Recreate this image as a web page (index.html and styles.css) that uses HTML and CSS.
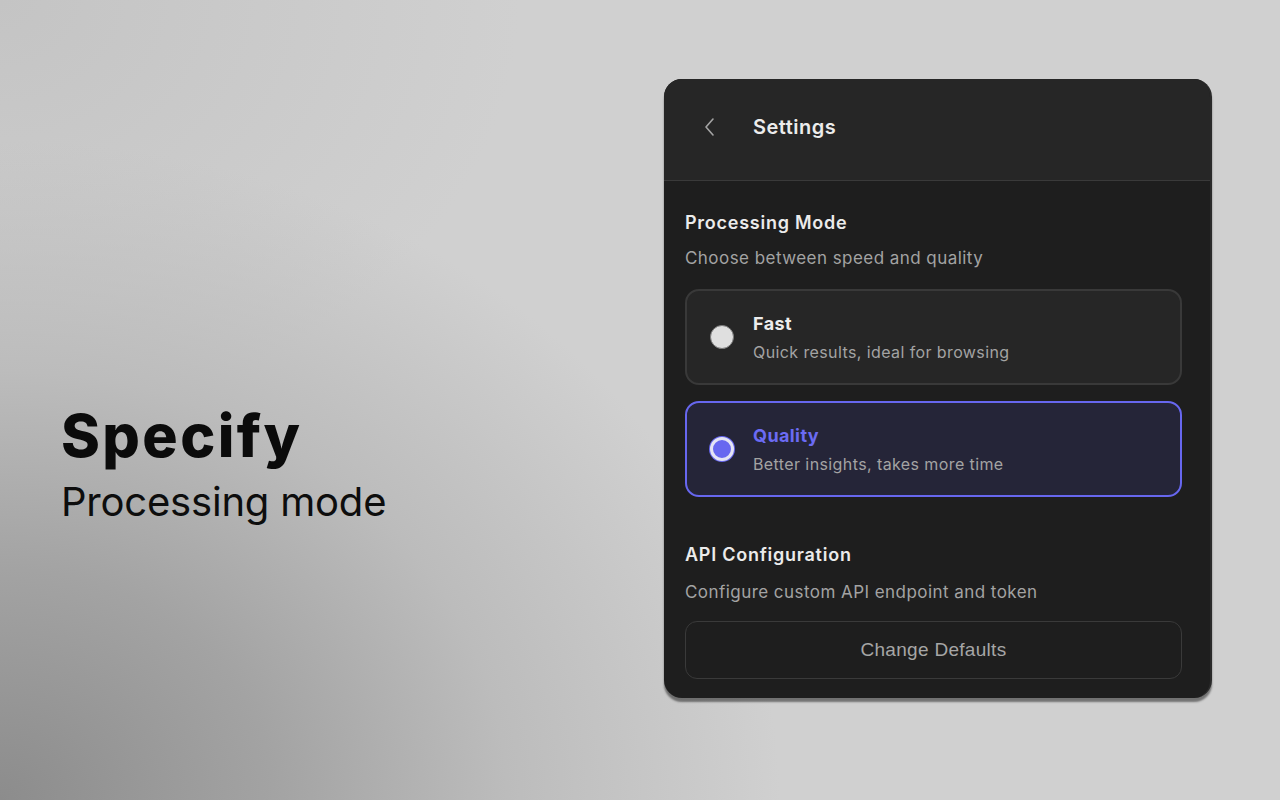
FILE: index.html
```html
<!DOCTYPE html>
<html lang="en">
<head>
<meta charset="utf-8">
<title>Specify – Processing mode</title>
<link rel="stylesheet" href="styles.css">
</head>
<body>
<main class="stage">
  <section class="intro">
    <h1 class="intro-title">Specify</h1>
    <p class="intro-sub">Processing mode</p>
  </section>

  <section class="panel">
    <header class="panel-header">
      <button class="back" aria-label="Back">
        <svg width="14" height="20" viewBox="0 0 14 20" fill="none" stroke="#a3a3a3" stroke-width="1.6" stroke-linecap="round" stroke-linejoin="round"><path d="M10 2 L3 10 L10 18"/></svg>
      </button>
      <h2 class="panel-title">Settings</h2>
    </header>

    <div class="panel-body">
      <h3 class="section-title">Processing Mode</h3>
      <p class="section-sub">Choose between speed and quality</p>

      <div class="options">
        <div class="option">
          <span class="radio"></span>
          <div class="option-text">
            <div class="option-title">Fast</div>
            <div class="option-sub">Quick results, ideal for browsing</div>
          </div>
        </div>
        <div class="option selected">
          <span class="radio checked"></span>
          <div class="option-text">
            <div class="option-title">Quality</div>
            <div class="option-sub">Better insights, takes more time</div>
          </div>
        </div>
      </div>

      <h3 class="section-title api">API Configuration</h3>
      <p class="section-sub api-sub">Configure custom API endpoint and token</p>
      <button class="defaults">Change Defaults</button>
    </div>
  </section>
</main>
</body>
</html>
```

FILE: styles.css
```css
* { box-sizing: border-box; }

html, body {
  margin: 0;
  padding: 0;
  width: 1280px;
  height: 800px;
  overflow: hidden;
}

body {
  font-family: Inter, "Noto Sans", "Liberation Sans", sans-serif;
  background:
    radial-gradient(ellipse 780px 660px at 0% 100%, #8c8c8c 0%, #a3a3a3 35%, #bcbcbc 65%, rgba(208,208,208,0) 100%),
    radial-gradient(ellipse 520px 420px at 0% 0%, #c4c4c4 0%, rgba(208,208,208,0) 100%),
    #d0d0d0;
}

.stage {
  display: flex;
  align-items: flex-start;
  height: 800px;
}

.intro {
  width: 664px;
  padding-left: 61px;
  margin-top: 401px;
}

.intro-title {
  margin: 0;
  font-size: 59px;
  line-height: 70px;
  font-weight: 800;
  color: #0b0b0b;
  letter-spacing: 2.4px;
}

.intro-sub {
  margin: 7px 0 0;
  font-size: 40px;
  line-height: 48px;
  font-weight: 400;
  color: #0d0d0d;
  letter-spacing: -0.2px;
}

.panel {
  margin-top: 79px;
  width: 548px;
  height: 619px;
  border-radius: 18px;
  background: #1e1e1e;
  overflow: hidden;
  box-shadow: 0 4px 2px rgba(0, 0, 0, 0.45);
  border-right: 2px solid #2b2b2b;
}

.panel-header {
  height: 102px;
  background: #262626;
  border-bottom: 1px solid #3a3a3a;
  display: flex;
  align-items: center;
  padding-left: 39px;
  padding-bottom: 5px;
}

.back {
  border: 0;
  background: none;
  padding: 0;
  width: 14px;
  height: 20px;
  display: flex;
  margin-right: 36px;
}

.panel-title {
  margin: 0;
  font-size: 20px;
  font-weight: 600;
  color: #ececec;
  letter-spacing: 0.5px;
}

.panel-body {
  padding: 29px 28px 0 21px;
}

.section-title {
  margin: 0;
  font-size: 18px;
  line-height: 26px;
  font-weight: 600;
  color: #ebebeb;
  letter-spacing: 0.75px;
}

.section-sub {
  margin: 10px 0 0;
  font-size: 17px;
  line-height: 24px;
  color: #a3a3a3;
  letter-spacing: 0.45px;
}

.options {
  margin-top: 19px;
  display: flex;
  flex-direction: column;
  gap: 16px;
}

.option {
  height: 96px;
  border: 2px solid #393939;
  border-radius: 14px;
  background: #262626;
  display: flex;
  align-items: center;
  padding-left: 23px;
}

.option.selected {
  border-color: #6767ef;
  background: #252538;
}

.radio {
  width: 24px;
  height: 24px;
  border-radius: 50%;
  background: #dfdfdf;
  border: 1px solid #7a7a7a;
  flex-shrink: 0;
  margin-right: 19px;
}

.radio.checked {
  background: #6767f0;
  border: 3px solid #e4e4f4;
  box-shadow: 0 0 0 1px #6767f0;
}

.option-text {
  display: flex;
  flex-direction: column;
  gap: 5px;
  margin-top: 0;
}

.option-title {
  font-size: 18px;
  line-height: 24px;
  font-weight: 700;
  color: #ececec;
  letter-spacing: 0.4px;
}

.selected .option-title {
  color: #6b6bf3;
}

.option-sub {
  font-size: 16px;
  line-height: 22px;
  color: #a3a3a3;
  letter-spacing: 0.4px;
}

.section-title.api {
  margin-top: 45px;
}

.section-sub.api-sub {
  margin-top: 12px;
}

.defaults {
  margin-top: 17px;
  width: 100%;
  height: 58px;
  border: 1px solid #3a3a3a;
  border-radius: 12px;
  background: transparent;
  color: #a6a6a6;
  font-family: "Liberation Sans", Arial, sans-serif;
  font-size: 19px;
  letter-spacing: 0.3px;
}
```
